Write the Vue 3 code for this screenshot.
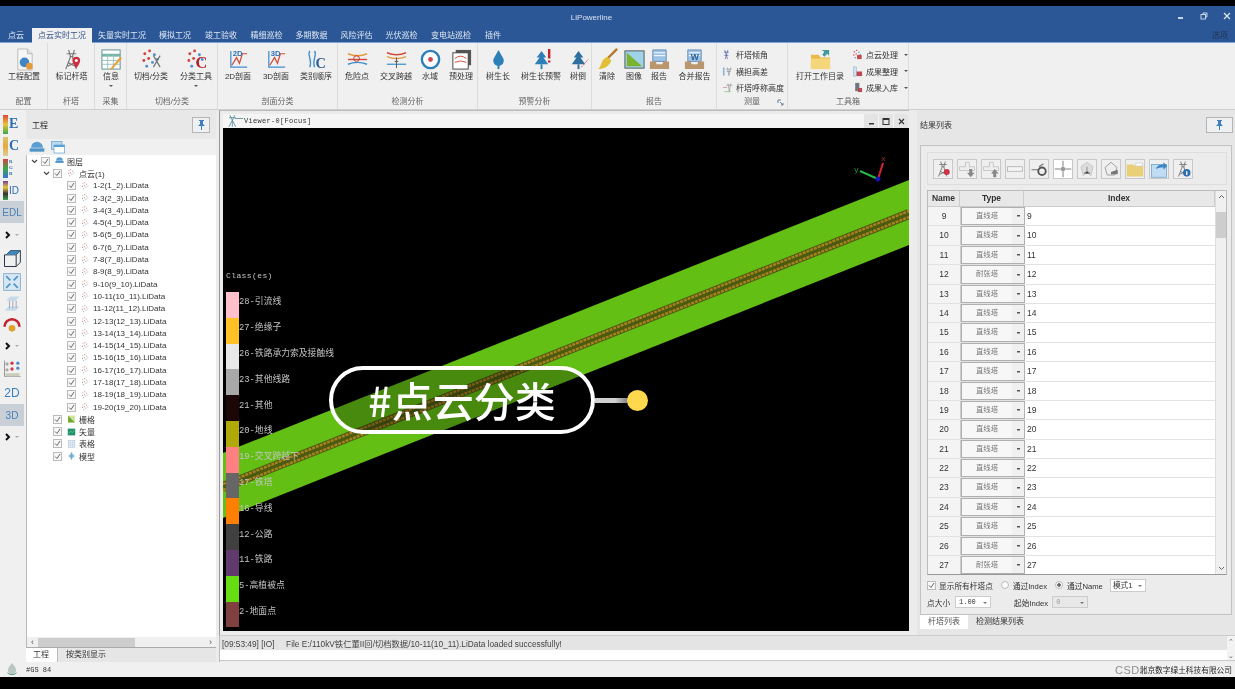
<template>
  <div class="app">
    <div class="titlebar">
      <span class="app-title">LiPowerline</span>
      <div class="win-btns">
        <svg width="8" height="8" viewBox="0 0 8 8"><rect x="1" y="5" width="5" height="2" fill="#c8d4e8" /></svg>
        <svg width="8" height="8" viewBox="0 0 8 8" fill="none" stroke="#c8d4e8"><rect x="1" y="2.5" width="4.5" height="4.5" /><path d="M3 2.5V1h4v4H5.5" /></svg>
        <svg width="8" height="8" viewBox="0 0 8 8" stroke="#dfe7f3" stroke-width="1.2"><path d="M1 1l6 6M7 1L1 7" /></svg>
      </div>
    </div>

    <div class="tabbar">
      <span
        v-for="t in tabs"
        :key="t.name"
        class="tab"
        :class="{ active: t.active }"
        :style="{ width: t.w + 'px' }"
      >{{ t.name }}</span>
      <span class="options">选项</span>
    </div>

    <div class="ribbon">
      <div v-for="g in groups" :key="g.label" class="rgroup" :style="{ width: g.w + 'px' }">
        <div class="ritems">
          <div v-for="b in g.items" :key="b.text" class="rbtn" :style="{ width: b.w + 'px' }">
            <svg class="ricon" viewBox="0 0 24 24" v-html="icons[b.icon]"></svg>
            <span class="rtext">{{ b.text }}</span>
            <span v-if="b.more" class="rmore"></span>
          </div>
          <div v-if="g.small" class="rsmall-col">
            <div v-for="s in g.small" :key="s.text" class="rsmall">
              <svg class="rsicon" viewBox="0 0 24 24" v-html="icons[s.icon]"></svg>
              <span>{{ s.text }}</span>
              <span v-if="s.more" class="rmore side"></span>
            </div>
          </div>
        </div>
        <div class="rlabel">{{ g.label }}</div>
        <svg v-if="g.launcher" class="launcher" width="7" height="7" viewBox="0 0 7 7" fill="none" stroke="#6a7f95"><path d="M1 4V1h3M3 3l3 3M6 4v2H4" /></svg>
      </div>
    </div>

    <div class="main">
      <div class="sidebar">
        <div v-for="(s, i) in sideTools" :key="i" class="stool" :class="{ on: s.on }" :style="{ height: s.h + 'px' }">
          <template v-if="s.bar">
            <span class="sbar" :style="{ background: s.bar }"></span>
            <span class="sletter" :class="{ tiny: s.tiny, sans: s.sans }">{{ s.text }}</span>
          </template>
          <span v-else-if="s.text" class="sword">{{ s.text }}</span>
          <svg v-else-if="s.icon" width="20" height="20" viewBox="0 0 24 24" v-html="icons[s.icon]"></svg>
          <span v-else class="schev">
            <svg width="6" height="8" viewBox="0 0 6 8" fill="none" stroke="#111" stroke-width="2"><path d="M1 1l3 3-3 3" /></svg>
            <i></i>
          </span>
        </div>
      </div>

      <div class="project">
        <div class="panel-head">
          <span>工程</span>
          <button class="pin"><svg width="9" height="10" viewBox="0 0 9 10" fill="#3f7fbf"><path d="M2 0h5v1H6v3l2 2H5v4H4V6H1l2-2V1H2z" /></svg></button>
        </div>
        <div class="ptools">
          <svg width="16" height="14" viewBox="0 0 24 20" v-html="icons.layer"></svg>
          <svg width="16" height="14" viewBox="0 0 24 20" v-html="icons.layers"></svg>
        </div>
        <div class="tree">
          <div v-for="n in tree" :key="n.text" class="tnode" :style="{ paddingLeft: n.pad + 'px' }">
            <svg v-if="n.open" class="arrow" width="7" height="5" viewBox="0 0 7 5" fill="none" stroke="#444" stroke-width="1.2"><path d="M1 1l2.5 2.5L6 1" /></svg>
            <span class="check">
              <svg width="7" height="7" viewBox="0 0 7 7" fill="none" stroke="#666"><path d="M1 3.5l2 2 3-4.5" /></svg>
            </span>
            <svg class="ticon" viewBox="0 0 24 24" v-html="icons[n.icon]"></svg>
            <span class="tlabel">{{ n.text }}</span>
          </div>
        </div>
        <div class="hscroll">
          <span class="sarrow">‹</span>
          <span class="hthumb"></span>
          <span class="hspace"></span>
          <span class="sarrow">›</span>
        </div>
        <div class="ptabs">
          <span class="ptab active">工程</span>
          <span class="ptab">按类别显示</span>
        </div>
      </div>

      <div class="work">
        <div class="upper">
          <div class="mdi">
            <div class="mdi-title">
              <svg width="20" height="14" viewBox="0 0 24 16" fill="none" stroke="#5b8a9a"><path d="M7 1l3 6 3-6M6 4h8M10 7v8M6 15l4-8 4 8M13 5h10" /></svg>
              <span>Viewer-0[Focus]</span>
              <div class="mdi-btns">
                <span><svg width="7" height="7" viewBox="0 0 7 7"><rect x="1" y="5" width="5" height="1.5" fill="#333" /></svg></span>
                <span><svg width="8" height="8" viewBox="0 0 8 8" fill="none" stroke="#333"><rect x="1" y="1.5" width="6" height="6" /><path d="M1 2.5h6" /></svg></span>
                <span><svg width="7" height="7" viewBox="0 0 7 7" stroke="#333" stroke-width="1.2"><path d="M1 1l5 5M6 1L1 6" /></svg></span>
              </div>
            </div>
            <div class="viewport">
              <svg class="scene" viewBox="0 0 686 503" width="686" height="503">
                <polygon points="0,325 686,52 686,117 0,390" fill="#63bf14" />
                <line x1="0" y1="359" x2="686" y2="86" stroke="#4c5a10" stroke-width="10" />
                <line x1="0" y1="356" x2="686" y2="83" stroke="#a5821e" stroke-width="2.5" stroke-dasharray="3 1" />
                <line x1="0" y1="362" x2="686" y2="89" stroke="#a5821e" stroke-width="2.5" stroke-dasharray="3 1" />
                <line x1="655" y1="51" x2="660" y2="35" stroke="#d02438" stroke-width="2" />
                <line x1="655" y1="51" x2="637" y2="43" stroke="#22b84a" stroke-width="2" />
                <circle cx="655" cy="51" r="2.5" fill="#1414b8" />
                <text x="658" y="33" fill="#b02a30" font-size="8" font-family="Liberation Mono">x</text>
                <text x="631" y="44" fill="#2a9a4a" font-size="8" font-family="Liberation Mono">y</text>
              </svg>
              <div class="legend">
                <div class="legend-title">Class(es)</div>
                <div v-for="c in classes" :key="c.label" class="lrow">
                  <span class="lswatch" :style="{ background: c.color }"></span>
                  <span class="ltext">{{ c.label }}</span>
                </div>
              </div>
            </div>
          </div>

          <div class="results">
            <div class="rhead">
              <span>结果列表</span>
              <button class="pin wide"><svg width="9" height="10" viewBox="0 0 9 10" fill="#3f7fbf"><path d="M2 0h5v1H6v3l2 2H5v4H4V6H1l2-2V1H2z" /></svg></button>
            </div>
            <div class="rbox">
              <div class="tbtns">
                <span v-for="(b, i) in resultTools" :key="i" class="tbtn" :class="{ lit: b.lit }">
                  <svg width="18" height="18" viewBox="0 0 24 24" v-html="icons[b.icon]"></svg>
                </span>
              </div>
              <div class="table">
                <div class="tbody">
                  <div class="thead">
                    <span class="c-name">Name</span>
                    <span class="c-type">Type</span>
                    <span class="c-index">Index</span>
                  </div>
                  <div v-for="r in rows" :key="r.id" class="trow">
                    <span class="c-name">{{ r.id }}</span>
                    <span class="c-type combo">
                      <em>{{ r.type }}</em>
                      <i></i>
                    </span>
                    <span class="c-index left">{{ r.id }}</span>
                  </div>
                </div>
                <div class="vscroll">
                  <svg width="7" height="5" viewBox="0 0 7 5" fill="none" stroke="#666"><path d="M1 4l2.5-2.5L6 4" /></svg>
                  <span class="vthumb"></span>
                  <span class="hspace"></span>
                  <svg width="7" height="5" viewBox="0 0 7 5" fill="none" stroke="#666"><path d="M1 1l2.5 2.5L6 1" /></svg>
                </div>
              </div>
              <div class="optrow">
                <span class="check small"><svg width="7" height="7" viewBox="0 0 7 7" fill="none" stroke="#666"><path d="M1 3.5l2 2 3-4.5" /></svg></span>
                <span class="o1">显示所有杆塔点</span>
                <span class="radio"></span>
                <span class="o2">通过Index</span>
                <span class="radio on"></span>
                <span class="o3">通过Name</span>
                <span class="select">模式1<i></i></span>
              </div>
              <div class="optrow second">
                <span class="o4">点大小</span>
                <span class="spin"><b>1.00</b><i></i></span>
                <span class="o5">起始Index</span>
                <span class="spin off"><b>0</b><i></i></span>
              </div>
            </div>
            <div class="rtabs">
              <span class="rtab active">杆塔列表</span>
              <span class="rtab">检测结果列表</span>
            </div>
          </div>
        </div>

        <div class="log">
          <div class="logline">
            <span>[09:53:49] [IO]&nbsp;&nbsp;&nbsp;&nbsp; File E:/110kV铁仁董II回/切档数据/10-11(10_11).LiData loaded successfully!</span>
            <i class="logbtn">⌃</i>
          </div>
          <div class="logblank"><i class="logbtn">⌄</i></div>
        </div>
      </div>
    </div>

    <div class="status">
      <svg width="12" height="13" viewBox="0 0 12 13"><path d="M6 0c2 3 4 4 4 7a4 4 0 0 1-8 0c0-3 2-4 4-7z" fill="#b9c7c4" /><path d="M1 9c3 3 7 3 10 0-1 4-9 4-10 0z" fill="#2d8a6a" /></svg>
      <span class="fps">#GS 84</span>
      <span class="watermark">CSDN</span>
      <span class="company">北京数字绿土科技有限公司</span>
    </div>

    <!-- video annotation laid over the whole window -->
    <div class="callout">
      <div class="pill">#点云分类</div>
      <span class="wire"></span>
      <span class="dot"></span>
    </div>
  </div>
</template>

<script setup>
const towerIcon = '<path d="M9 2l2 7-5 13M15 2l-2 7 4 13M7 6h10M10 9h4M8 15l8 4M16 15l-8 4" fill="none" stroke="#777" stroke-width="1.2"/>'
const dots = (c1, c2) => `<g fill="${c1}"><circle cx="5" cy="6" r="1.5"/><circle cx="10" cy="3" r="1.5"/><circle cx="4" cy="13" r="1.5"/><circle cx="9" cy="11" r="1.5"/></g><g fill="${c2}"><circle cx="15" cy="7" r="1.5"/><circle cx="13" cy="15" r="1.5"/><circle cx="7" cy="19" r="1.5"/><circle cx="18" cy="12" r="1.5"/></g>`
const profile = (t) => `<path d="M4 3v17h17" fill="none" stroke="#3f8fcf" stroke-width="1.3"/><path d="M5 18l5-8 3 6 3-10h5" fill="none" stroke="#d04a3a" stroke-width="1.3"/><text x="6" y="8" font-size="8" fill="#2f6fb0" font-family="Liberation Sans" font-weight="700">${t}</text>`
const pine = (c) => `<path d="M12 3l5 7h-3l5 7H5l5-7H7z" fill="${c}"/><rect x="11" y="17" width="2" height="5" fill="${c}"/>`
const tray = (c) => `<path d="M5 2h14v12H5z" fill="${c}" stroke="#6b8fb3"/><path d="M6 5h12M6 8h12" stroke="#fff"/><path d="M2 14h6l1 3h6l1-3h6v8H2z" fill="#b9966e"/>`

const icons = {
  config: '<path d="M5 1h10l5 5v17H5z" fill="#f6f6f6" stroke="#bbb"/><path d="M15 1v5h5" fill="#ddd" stroke="#bbb"/><circle cx="12" cy="15" r="5" fill="#3f86c6"/><circle cx="17" cy="19" r="3.5" fill="#e59a3a"/>',
  mark: towerIcon + '<path d="M17 9a4 4 0 0 1 4 4c0 3-4 8-4 8s-4-5-4-8a4 4 0 0 1 4-4z" fill="#d22b3c"/><circle cx="17" cy="13" r="1.6" fill="#fff"/>',
  info: '<rect x="2" y="2" width="19" height="20" fill="#fff" stroke="#5f8f8f"/><path d="M2 6h19v3H2z" fill="#74b7a8"/><path d="M2 13h19M2 17h19M8 6v16M14 6v16" stroke="#9bc3c0"/><path d="M21 9L12 20l-2 3 3-1 10-11z" fill="#e7a33a"/>',
  cut: dots('#d8413c', '#4f8fcf') + '<path d="M14 8l7 12M21 8l-7 12" stroke="#777" stroke-width="1.3"/>',
  classify: dots('#d8413c', '#4f8fcf') + '<text x="11" y="21" font-size="17" font-weight="700" fill="#b8232b" font-family="Liberation Serif">C</text>',
  p2d: profile('2D'),
  p3d: profile('3D'),
  order: '<path d="M5 3c-3 5 3 9 0 17M10 3c3 5-3 9 0 17" fill="none" stroke="#3f8fcf" stroke-width="1.4"/><text x="11" y="21" font-size="15" font-weight="700" fill="#2d5f90" font-family="Liberation Serif">C</text>',
  danger: '<path d="M2 6q10 4 20 0" fill="none" stroke="#e59a3a" stroke-width="1.5"/><path d="M2 12h20" stroke="#d24a3a" stroke-width="1.5"/><path d="M2 17q10-4 20 0" fill="none" stroke="#3f8fcf" stroke-width="1.5"/><circle cx="11" cy="11" r="3" fill="none" stroke="#c33"/>',
  cross: '<path d="M2 5q10 4 20 0" fill="none" stroke="#d24a3a" stroke-width="1.5"/><path d="M2 9q10 4 20 0" fill="none" stroke="#e59a3a" stroke-width="1.5"/><path d="M2 17h20" stroke="#4fa0d0" stroke-width="1.5"/><path d="M12 10v11M10 14h4" stroke="#555"/>',
  water: '<circle cx="12" cy="12" r="9" fill="#fff" stroke="#2d7fb8" stroke-width="2.5"/><circle cx="12" cy="12" r="2.5" fill="#cf4a50"/>',
  pre: '<rect x="6" y="2" width="16" height="16" fill="#555"/><rect x="3" y="5" width="16" height="17" fill="#fff" stroke="#444"/><path d="M5 11q6-5 12 0M5 15q6-3 12 0" fill="none" stroke="#d24a3a"/>',
  grow: '<path d="M12 2l5 9a5.5 5.5 0 1 1-10 0z" fill="#2d7fb8"/><rect x="11" y="17" width="2" height="5" fill="#2d7fb8"/>',
  warn: pine('#2d7fb8') + '<path d="M20 1v10M20 13v2" stroke="#c4222c" stroke-width="2.5"/>',
  fall: pine('#2d6f9f') + '<path d="M15 20l7-8" stroke="#d04a50" stroke-dasharray="1.5 1"/>',
  broom: '<path d="M22 1L11 12" stroke="#b8772a" stroke-width="2.5"/><path d="M12 9l4 4c-2 6-8 9-14 9 3-2 3-5 4-7 1-3 3-5 6-6z" fill="#e3bf35"/>',
  image: '<rect x="2" y="3" width="20" height="18" fill="#9fd3e8" stroke="#555"/><path d="M4 5l16 14H4z" fill="#7bb331"/>',
  report: tray('#9cc3e6'),
  merge: tray('#9cc3e6') + '<text x="8" y="12" font-size="9" font-weight="700" fill="#2d5f90" font-family="Liberation Sans">W</text>',
  tilt: '<path d="M6 2l6 20M13 2L7 22M4 7h11M5 14h9" fill="none" stroke="#5a6aa8" stroke-width="1.6"/>',
  height: '<path d="M4 3v18" stroke="#3f8fcf" stroke-width="2"/><path d="M12 3l3 18M19 3l-4 18M9 7h12M10 12h9" fill="none" stroke="#888" stroke-width="1.3"/>',
  nominal: '<path d="M13 3l3 18M19 3l-3 18M9 7h14" fill="none" stroke="#888" stroke-width="1.3"/><path d="M2 12h9" stroke="#c44"/><path d="M5 21h14" stroke="#4a4"/>',
  folder: '<path d="M2 7h8l2 3h10v12H2z" fill="#e9b949"/><path d="M2 11h20v11H2z" fill="#f6d67a"/><path d="M13 2h8v6l-2-2-3 3-2-2 2-3z" fill="#3f9b9b"/>',
  pcproc: dots('#d8413c', '#4f8fcf') + '<rect x="11" y="13" width="10" height="9" fill="#c44a50"/>',
  arrange: '<rect x="3" y="2" width="7" height="20" fill="#cfe3f2" stroke="#7ea6c6"/><rect x="10" y="12" width="12" height="10" fill="#bd4a52"/>',
  store: '<rect x="7" y="2" width="9" height="18" fill="#6f7680"/><rect x="13" y="13" width="9" height="9" fill="#bd4a52"/>',
  layer: '<path d="M3 11a9 9 0 0 1 18 0z" fill="#5a9fd4"/><rect x="1" y="12" width="22" height="5" fill="#4f93c8"/>',
  layers: '<rect x="2" y="2" width="16" height="12" fill="#bcd9ee" stroke="#5a9fd4"/><rect x="6" y="7" width="16" height="12" fill="#fff" stroke="#5a9fd4"/><path d="M6 7h16v3H6z" fill="#5a9fd4"/>',
  cloud: dots('#d88a7a', '#9bb0c8'),
  raster: '<rect x="3" y="3" width="18" height="18" fill="#cfe39a"/><path d="M3 3l18 18H3z" fill="#6ea82f"/>',
  vector: '<rect x="2" y="3" width="20" height="18" fill="#1f8f72"/><path d="M4 17l6-8 4 5 6-7" fill="none" stroke="#8fe05a" stroke-width="1.5"/>',
  sheet: '<rect x="3" y="3" width="18" height="18" fill="#eaf2f8" stroke="#8aaac4"/><path d="M3 9h18M3 15h18M9 3v18M15 3v18" stroke="#a9c2d6"/>',
  model: '<path d="M12 2l8 10-8 10-8-10z" fill="#8fc6e6"/><path d="M12 2v20M4 12h16" stroke="#3f86b8"/>',
  box: '<path d="M5 7l5-5h12v14l-5 5H3V7h14v14M17 7l5-5" fill="none" stroke="#26384a" stroke-width="1.2"/><path d="M5 7l5-5h12l-5 5z" fill="#3f86b8"/>',
  fit: '<rect x="2" y="2" width="20" height="20" fill="#d7e7f3" stroke="#7ea6c6"/><path d="M5 5l5 5M19 5l-5 5M5 19l5-5M19 19l-5-5" stroke="#4f93c8" stroke-width="2"/>',
  planes: '<path d="M5 8l5-5h11l-5 5zM3 20l5-5h13l-5 5z" fill="#c6d9e8"/><path d="M9 8v9M13 8v9M17 8v9" stroke="#99a"/>',
  arc: '<path d="M3 14a9 9 0 0 1 18 0" fill="none" stroke="#c4222c" stroke-width="3"/><circle cx="12" cy="16" r="4" fill="#e0a030"/>',
  cluster: '<path d="M3 2v19h19" fill="none" stroke="#888"/><g fill="#cf3a44"><circle cx="12" cy="5" r="2"/><circle cx="12" cy="12" r="2"/></g><g fill="#4f8fcf"><circle cx="19" cy="5" r="2"/><circle cx="19" cy="11" r="2"/></g><g fill="#aaa"><circle cx="6" cy="6" r="2"/><circle cx="6" cy="13" r="2"/></g><rect x="4" y="17" width="17" height="4" fill="#ccb"/>',
  tmark: towerIcon + '<circle cx="17" cy="16" r="4" fill="#cc3344"/>',
  down: '<path d="M2 9h8V3h5v6h7v5H2z" fill="#eee" stroke="#bbb"/><path d="M15 12h4v5h3l-5 6-5-6h3z" fill="#888"/>',
  up: '<path d="M2 9h8V3h5v6h7v5H2z" fill="#eee" stroke="#bbb"/><path d="M15 23h4v-5h3l-5-6-5 6h3z" fill="#888"/>',
  dash: '<rect x="2" y="9" width="20" height="6" fill="#f4f4f4" stroke="#aaa"/>',
  gear: '<path d="M2 13h10M12 9l6-4" stroke="#777" stroke-width="1.5"/><circle cx="16" cy="15" r="5" fill="none" stroke="#555" stroke-width="2.5"/>',
  crosshair: '<path d="M12 1v8M12 15v8M1 12h8M15 12h8" stroke="#aaa" stroke-width="2"/><circle cx="12" cy="12" r="3" fill="#999"/>',
  net: '<path d="M12 3l8 6-3 12-5-6-5 6-3-12z" fill="#ddd" stroke="#bbb"/><path d="M12 9v6M8 18l4-3 4 3" stroke="#999" stroke-width="1.5"/>',
  star: '<path d="M4 10l8-7 8 7-3 10H7z" fill="#eee" stroke="#888"/><path d="M12 16l9-3v6h-9z" fill="#777"/>',
  ofolder: '<path d="M1 6h9l2 2h11v14H1z" fill="#e8cf78"/><path d="M13 4h9v4h-9z" fill="#fff" stroke="#ccc"/>',
  export: '<rect x="2" y="6" width="20" height="17" fill="#bfdcf2" stroke="#6aa0cc"/><path d="M8 12c1-5 6-6 10-6V3l5 5-5 5v-3c-4 0-7 0-10 2z" fill="#3f86c6"/>',
  tinfo: towerIcon + '<circle cx="17" cy="17" r="5" fill="#2d6fb0"/><path d="M17 15v5" stroke="#fff" stroke-width="1.8"/>'
}

const tabs = [
  { name: '点云', w: 32 },
  { name: '点云实时工况', w: 60, active: true },
  { name: '矢量实时工况', w: 60 },
  { name: '模拟工况', w: 46 },
  { name: '竣工验收', w: 46 },
  { name: '精细巡检', w: 45 },
  { name: '多期数据', w: 45 },
  { name: '风险评估', w: 45 },
  { name: '光伏巡检', w: 45 },
  { name: '变电站巡检', w: 54 },
  { name: '插件', w: 30 }
]

const groups = [
  { label: '配置', w: 48, items: [{ text: '工程配置', icon: 'config', w: 48 }] },
  { label: '杆塔', w: 47, items: [{ text: '标记杆塔', icon: 'mark', w: 47 }] },
  { label: '采集', w: 32, items: [{ text: '信息', icon: 'info', w: 32, more: true }] },
  { label: '切档/分类', w: 91, items: [{ text: '切档/分类', icon: 'cut', w: 48 }, { text: '分类工具', icon: 'classify', w: 42, more: true }] },
  { label: '剖面分类', w: 120, items: [{ text: '2D剖面', icon: 'p2d', w: 40 }, { text: '3D剖面', icon: 'p3d', w: 36 }, { text: '类别顺序', icon: 'order', w: 44 }] },
  { label: '检测分析', w: 140, items: [{ text: '危险点', icon: 'danger', w: 38 }, { text: '交叉跨越', icon: 'cross', w: 40 }, { text: '水域', icon: 'water', w: 28 }, { text: '预处理', icon: 'pre', w: 34 }] },
  { label: '预警分析', w: 114, items: [{ text: '树生长', icon: 'grow', w: 40 }, { text: '树生长预警', icon: 'warn', w: 46 }, { text: '树倒', icon: 'fall', w: 28 }] },
  { label: '报告', w: 125, items: [{ text: '清除', icon: 'broom', w: 30 }, { text: '图像', icon: 'image', w: 24 }, { text: '报告', icon: 'report', w: 26 }, { text: '合并报告', icon: 'merge', w: 45 }] },
  { label: '测量', w: 71, launcher: true, items: [], small: [{ text: '杆塔倾角', icon: 'tilt' }, { text: '横担高差', icon: 'height' }, { text: '杆塔呼称高度', icon: 'nominal' }] },
  {
    label: '工具箱',
    w: 121,
    items: [{ text: '打开工作目录', icon: 'folder', w: 64 }],
    small: [{ text: '点云处理', icon: 'pcproc', more: true }, { text: '成果整理', icon: 'arrange', more: true }, { text: '成果入库', icon: 'store', more: true }]
  }
]

const sideTools = [
  { text: 'E', bar: 'linear-gradient(#e5443a,#e8c53a,#39a84a)', h: 22 },
  { text: 'C', bar: 'linear-gradient(#d9c46a,#e8a83a,#d9d09a)', h: 22 },
  { text: 'RGB', tiny: true, bar: 'linear-gradient(#d8403a,#3aa84a,#3a70d8)', h: 22 },
  { text: 'ID', sans: true, bar: 'linear-gradient(#6a3fa0,#e8c53a,#333,#3aa84a)', h: 22 },
  { text: 'EDL', on: true, h: 22 },
  { h: 24 },
  { icon: 'box', h: 24 },
  { icon: 'fit', h: 22 },
  { icon: 'planes', h: 22 },
  { icon: 'arc', h: 20 },
  { h: 22 },
  { icon: 'cluster', h: 24 },
  { text: '2D', h: 23 },
  { text: '3D', on: true, h: 22 },
  { h: 22 }
]

const tree = [
  { text: '图层', icon: 'layer', pad: 4, open: true },
  { text: '点云(1)', icon: 'cloud', pad: 16, open: true },
  ...['1-2(1_2)', '2-3(2_3)', '3-4(3_4)', '4-5(4_5)', '5-6(5_6)', '6-7(6_7)', '7-8(7_8)', '8-9(8_9)', '9-10(9_10)', '10-11(10_11)', '11-12(11_12)', '12-13(12_13)', '13-14(13_14)', '14-15(14_15)', '15-16(15_16)', '16-17(16_17)', '17-18(17_18)', '18-19(18_19)', '19-20(19_20)'].map((s) => ({ text: s + '.LiData', icon: 'cloud', pad: 40 })),
  { text: '栅格', icon: 'raster', pad: 26 },
  { text: '矢量', icon: 'vector', pad: 26 },
  { text: '表格', icon: 'sheet', pad: 26 },
  { text: '模型', icon: 'model', pad: 26 }
]

const classes = [
  { label: '28-引流线', color: '#ffc0cb' },
  { label: '27-绝缘子', color: '#ffc125' },
  { label: '26-铁路承力索及接触线', color: '#e8e8e8' },
  { label: '23-其他线路', color: '#a8a8a8' },
  { label: '21-其他', color: '#1c0606' },
  { label: '20-地线', color: '#b0aa08' },
  { label: '19-交叉跨越下', color: '#ff8080' },
  { label: '17-铁塔', color: '#666666' },
  { label: '16-导线', color: '#ff7f00' },
  { label: '12-公路', color: '#404040' },
  { label: '11-铁路', color: '#5f3a6a' },
  { label: '5-高植被点', color: '#66dd11' },
  { label: '2-地面点', color: '#804040' }
]

const resultTools = [
  { icon: 'tmark' }, { icon: 'down' }, { icon: 'up' }, { icon: 'dash' }, { icon: 'gear' },
  { icon: 'crosshair', lit: true }, { icon: 'net' }, { icon: 'star' }, { icon: 'ofolder' }, { icon: 'export' }, { icon: 'tinfo' }
]

const rows = []
for (let i = 9; i <= 27; i++) {
  rows.push({ id: i, type: i === 12 || i === 27 ? '耐张塔' : '直线塔' })
}
</script>

<style>
html, body {
  margin: 0;
  background: #000;
  overflow: hidden;
}
</style>

<style scoped>
.app {
  position: relative;
  width: 1235px;
  height: 689px;
  padding: 6px 0 12px;
  box-sizing: border-box;
  background: #000;
  display: flex;
  flex-direction: column;
  font-family: "Liberation Sans", "Noto Sans CJK SC", sans-serif;
  font-size: 8px;
  color: #333;
  overflow: hidden;
  filter: blur(0.45px);
}

/* title + tabs */
.titlebar {
  height: 22px;
  background: #2b5797;
  display: flex;
  align-items: center;
  justify-content: center;
  position: relative;
}
.app-title {
  color: #d5e0f0;
  font-size: 8px;
  margin: 1px 52px 0 0;
}
.win-btns {
  position: absolute;
  right: 4px;
  top: 6px;
  display: flex;
  gap: 15px;
}
.tabbar {
  height: 15px;
  background: #2b5797;
  display: flex;
  align-items: stretch;
  border-bottom: 1px solid #7fa3d6;
  box-sizing: border-box;
}
.tab {
  color: #dfe7f3;
  text-align: center;
  line-height: 15px;
  white-space: nowrap;
}
.tab.active {
  background: #f0f0f0;
  color: #33518a;
  margin-top: -1px;
  height: 16px;
  border-top: 1px solid #7fa3d6;
  box-sizing: border-box;
}
.options {
  margin-left: auto;
  margin-right: 7px;
  color: #22344f;
  line-height: 15px;
}

/* ribbon */
.ribbon {
  height: 67px;
  background: #f0f0f0;
  display: flex;
  border-bottom: 1px solid #cfcfcf;
  box-sizing: border-box;
}
.rgroup {
  display: flex;
  flex-direction: column;
  border-right: 1px solid #dcdcdc;
  box-sizing: border-box;
  flex: none;
  position: relative;
}
.ritems {
  height: 51px;
  display: flex;
  padding-top: 5px;
  box-sizing: border-box;
}
.rbtn {
  display: flex;
  flex-direction: column;
  align-items: center;
  flex: none;
  white-space: nowrap;
}
.ricon {
  width: 23px;
  height: 23px;
  flex: none;
}
.rtext {
  line-height: 11px;
}
.rmore {
  width: 0;
  height: 0;
  margin-top: 3px;
  border-left: 2px solid transparent;
  border-right: 2px solid transparent;
  border-top: 2px solid #555;
}
.rmore.side {
  margin: 0 0 0 3px;
}
.rlabel {
  text-align: center;
  color: #666;
  line-height: 12px;
  margin-top: 2px;
}
.launcher {
  position: absolute;
  right: 3px;
  bottom: 3px;
}
.rsmall-col {
  display: flex;
  flex-direction: column;
  gap: 3.5px;
  padding-left: 5px;
}
.ritems .rbtn + .rsmall-col {
  padding-left: 0;
}
.rsmall {
  display: flex;
  align-items: center;
  gap: 3px;
  height: 13px;
  white-space: nowrap;
}
.rsicon {
  width: 11px;
  height: 11px;
  flex: none;
}

/* main columns */
.main {
  flex: 1;
  display: flex;
  min-height: 0;
  background: #ececec;
}
.sidebar {
  width: 26px;
  flex: none;
  background: #f0f0f0;
  display: flex;
  flex-direction: column;
  padding-top: 3px;
  box-sizing: border-box;
}
.stool {
  display: flex;
  align-items: center;
  justify-content: center;
  width: 24px;
  flex: none;
}
.stool.on {
  background: #c9cfd6;
}
.sbar {
  width: 5px;
  height: 19px;
  margin-right: 1px;
}
.sletter {
  font: 700 14px "Liberation Serif", serif;
  color: #2d6fb0;
  width: 12px;
}
.sletter.sans {
  font: 400 10px "Liberation Sans", sans-serif;
}
.sletter.tiny {
  font-size: 5px;
  line-height: 6px;
  white-space: normal;
  word-break: break-all;
  width: 6px;
  margin-right: 6px;
}
.sword {
  font-size: 12px;
  color: #3a7fc0;
}
.stool.on .sword {
  color: #4a82b5;
  font-size: 10px;
}
.schev {
  display: flex;
  align-items: center;
  gap: 4px;
}
.schev i {
  border-left: 2px solid transparent;
  border-right: 2px solid transparent;
  border-top: 2px solid #aaa;
}

/* project panel */
.project {
  width: 190px;
  flex: none;
  display: flex;
  flex-direction: column;
  margin-right: 3px;
}
.panel-head {
  height: 29px;
  display: flex;
  align-items: center;
  justify-content: space-between;
  padding: 0 6px;
  background: #e8e8e8;
  color: #222;
  box-sizing: border-box;
}
.pin {
  width: 18px;
  height: 16px;
  padding: 0;
  border: 1px solid #b5b5b5;
  background: #eef0f2;
  display: flex;
  align-items: center;
  justify-content: center;
}
.pin.wide {
  width: 27px;
}
.ptools {
  height: 16px;
  display: flex;
  gap: 5px;
  padding-left: 3px;
  align-items: center;
  background: #f0f0f0;
}
.tree {
  flex: 1;
  background: #fff;
  border-left: 1px solid #bbb;
  min-height: 0;
  overflow: hidden;
}
.tnode {
  height: 12.3px;
  display: flex;
  align-items: center;
  white-space: nowrap;
  color: #333;
  font-size: 8px;
}
.arrow {
  margin-right: 3px;
}
.check {
  width: 7px;
  height: 7px;
  border: 1px solid #bbb;
  background: #f7f7f7;
  display: inline-flex;
  flex: none;
}
.ticon {
  width: 9px;
  height: 10px;
  margin: 0 3px 0 5px;
  flex: none;
}
.hscroll {
  height: 10px;
  background: #f0f0f0;
  border-left: 1px solid #bbb;
  border-bottom: 1px solid #aaa;
  display: flex;
  align-items: center;
  color: #555;
  font-size: 9px;
}
.sarrow {
  width: 11px;
  text-align: center;
  line-height: 9px;
}
.hthumb {
  width: 97px;
  height: 9px;
  background: #cdcdcd;
}
.hspace {
  flex: 1;
}
.ptabs {
  height: 14px;
  display: flex;
  background: #e6e6e6;
}
.ptab {
  padding: 0 8px;
  line-height: 13px;
  color: #333;
}
.ptab.active {
  background: #fff;
  padding: 0 7px;
  width: 17px;
  border-right: 1px solid #bbb;
}

/* center + right */
.work {
  flex: 1;
  min-width: 0;
  display: flex;
  flex-direction: column;
}
.upper {
  height: 525px;
  display: flex;
}
.mdi {
  width: 690px;
  flex: none;
  padding: 3px 1px 0 3px;
  box-sizing: border-box;
  border-top: 1px solid #bbb;
  border-left: 1px solid #999;
  background: #ececec;
}
.mdi-title {
  height: 14px;
  display: flex;
  align-items: center;
  background: #f5f5f5;
  font: 7px "Liberation Mono", "Noto Sans CJK SC", monospace;
  color: #333;
  padding-left: 1px;
}
.mdi-title span {
  letter-spacing: 0.3px;
}
.mdi-btns {
  margin-left: auto;
  display: flex;
  gap: 1px;
}
.mdi-btns span {
  width: 14px;
  height: 14px;
  background: #e4e4e4;
  display: flex;
  align-items: center;
  justify-content: center;
}
.viewport {
  width: 686px;
  height: 503px;
  background: #000;
  position: relative;
  overflow: hidden;
}
.scene {
  display: block;
}
.legend {
  position: absolute;
  left: 3px;
  top: 141px;
  font: 7.5px "Liberation Mono", "Noto Sans CJK SC", monospace;
  color: #c4c4c4;
}
.legend-title {
  height: 21px;
  padding-top: 2px;
  letter-spacing: 0.4px;
  font-size: 8px;
}
.lrow {
  display: flex;
  height: 25.8px;
  align-items: center;
}
.lswatch {
  width: 13px;
  height: 100%;
  flex: none;
}
.ltext {
  white-space: nowrap;
  font-size: 8.8px;
  margin-bottom: 8px;
}

.results {
  flex: 1;
  margin-left: 8px;
  display: flex;
  flex-direction: column;
  min-width: 0;
  background: #e6e6e6;
}
.rhead {
  height: 27px;
  display: flex;
  align-items: center;
  justify-content: space-between;
  padding: 2px 2px 0 3px;
  box-sizing: border-box;
  color: #333;
}
.rbox {
  margin: 8px 3px 0 3px;
  height: 470px;
  border: 1px solid #c2c2c2;
  padding: 6px 4px 0 3px;
  box-sizing: border-box;
  background: #ececec;
}
.tbtns {
  height: 33px;
  border: 1px solid #ddd;
  display: flex;
  gap: 4px;
  padding: 0 5px;
  align-items: center;
  box-sizing: border-box;
  margin-left: 3px;
}
.tbtn {
  width: 20px;
  height: 20px;
  border: 1px solid #c8c8c8;
  box-sizing: border-box;
  display: flex;
  align-items: center;
  justify-content: center;
  background: #efefef;
}
.tbtn.lit {
  background: #fff;
}
.table {
  margin: 5px 0 0 3px;
  height: 385px;
  border: 1px solid #bbb;
  border-bottom-color: #999;
  display: flex;
  box-sizing: border-box;
  overflow: hidden;
}
.tbody {
  flex: 1;
  min-width: 0;
}
.thead,
.trow {
  display: flex;
}
.thead {
  height: 16px;
  background: #e8e8e8;
  font-weight: 700;
  font-size: 8.5px;
  line-height: 15px;
  color: #333;
  text-align: center;
}
.thead span {
  border-right: 1px solid #ccc;
  border-bottom: 1px solid #ccc;
  box-sizing: border-box;
}
.trow {
  height: 19.4px;
  background: #fff;
  border-bottom: 1px solid #e2e2e2;
  box-sizing: border-box;
  align-items: stretch;
  line-height: 18px;
  font-size: 8.5px;
}
.c-name {
  width: 32px;
  text-align: center;
  flex: none;
  background: #f4f4f4;
  border-right: 1px solid #ccc;
}
.thead .c-name {
  background: none;
}
.c-type {
  width: 64px;
  flex: none;
  text-align: center;
}
.c-index {
  flex: 1;
  text-align: center;
}
.c-index.left {
  text-align: left;
  padding-left: 2px;
}
.combo {
  display: flex;
  background: #e8e8e8;
  border: 1px solid #b0b0b0;
  box-sizing: border-box;
  color: #777;
  line-height: 16px;
  font-size: 7.4px;
}
.combo em {
  flex: 1;
  font-style: normal;
  background: #f7f7f7;
}
.combo i {
  width: 12px;
  background: linear-gradient(#555, #555) center / 3px 1.5px no-repeat #f0f0f0;
}
.vscroll {
  width: 11px;
  flex: none;
  background: #f0f0f0;
  display: flex;
  flex-direction: column;
  align-items: center;
  padding: 3px 0;
  box-sizing: border-box;
  border-left: 1px solid #ddd;
}
.vthumb {
  width: 100%;
  height: 26px;
  background: #cdcdcd;
  margin-top: 13px;
}
.optrow {
  display: flex;
  align-items: center;
  height: 16px;
  margin-top: 2px;
  padding-left: 3px;
  white-space: nowrap;
  font-size: 7.7px;
}
.optrow.second {
  margin-top: 1px;
}
.check.small {
  margin-right: 3px;
}
.radio {
  width: 6px;
  height: 6px;
  border: 1px solid #bbb;
  border-radius: 50%;
  background: #fafafa;
  margin: 0 4px 0 8px;
  flex: none;
}
.radio.on {
  background: radial-gradient(circle, #666 0 1.5px, #fafafa 2px);
}
.select {
  width: 36px;
  height: 13px;
  margin-left: 7px;
  background: #fff;
  border: 1px solid #ccc;
  box-sizing: border-box;
  line-height: 12px;
  padding-left: 2px;
  position: relative;
}
.select i,
.spin i {
  position: absolute;
  right: 3px;
  top: 5px;
  border-left: 2px solid transparent;
  border-right: 2px solid transparent;
  border-top: 2px solid #777;
}
.o4 {
  width: 28px;
}
.o5 {
  margin-left: 23px;
  margin-right: 4px;
}
.spin {
  width: 36px;
  height: 12px;
  background: #fff;
  border: 1px solid #ccc;
  box-sizing: border-box;
  padding-left: 3px;
  position: relative;
  font: 7px/11px "Liberation Mono", monospace;
}
.spin b {
  font-weight: 400;
}
.spin.off {
  background: #e8e8e8;
  color: #999;
}
.rtabs {
  display: flex;
  height: 14px;
  margin-left: 3px;
  line-height: 13px;
}
.rtab {
  padding: 0 8px;
  white-space: nowrap;
}
.rtab.active {
  background: #fff;
  color: #555;
}

/* log */
.log {
  flex: 1;
  display: flex;
  flex-direction: column;
  border-left: 1px solid #bbb;
}
.logline {
  height: 15px;
  background: #e4e4e4;
  border-top: 1px solid #ccc;
  box-sizing: border-box;
  display: flex;
  align-items: center;
  justify-content: space-between;
  padding-left: 2px;
  color: #444;
  font-size: 8.3px;
}
.logblank {
  height: 10px;
  background: #fff;
  display: flex;
  justify-content: flex-end;
  border-bottom: 1px solid #ccc;
}
.logbtn {
  width: 8px;
  height: 100%;
  font-style: normal;
  font-size: 7px;
  line-height: 12px;
  color: #666;
  text-align: center;
  background: #f3f3f3;
}

/* status */
.status {
  height: 15px;
  background: #f0f0f0;
  display: flex;
  align-items: center;
  padding-left: 6px;
  position: relative;
  font-family: "Liberation Mono", monospace;
}
.fps {
  margin-left: 8px;
  font-size: 7px;
}
.company {
  margin-left: auto;
  margin-right: 3px;
  font-family: "Liberation Sans", "Noto Sans CJK SC", sans-serif;
  font-size: 7.7px;
  color: #222;
}
.watermark {
  position: absolute;
  left: 1115px;
  top: 2px;
  font: 11px "Liberation Sans", sans-serif;
  color: #8d8d8d;
  letter-spacing: 0.5px;
}

/* annotation */
.callout {
  position: absolute;
  left: 329px;
  top: 366px;
  display: flex;
  align-items: center;
}
.pill {
  width: 266px;
  height: 68px;
  border: 4px solid #fff;
  border-radius: 34px;
  box-sizing: border-box;
  background: rgba(0, 0, 0, 0.28);
  color: #fff;
  font: 500 41px "Noto Sans CJK SC", sans-serif;
  line-height: 58px;
  text-align: center;
}
.wire {
  width: 33px;
  height: 5px;
  background: linear-gradient(90deg, #d0d0d0 60%, #808080);
}
.dot {
  width: 21px;
  height: 21px;
  border-radius: 50%;
  background: #ffd84d;
  margin-left: -1px;
}
</style>
